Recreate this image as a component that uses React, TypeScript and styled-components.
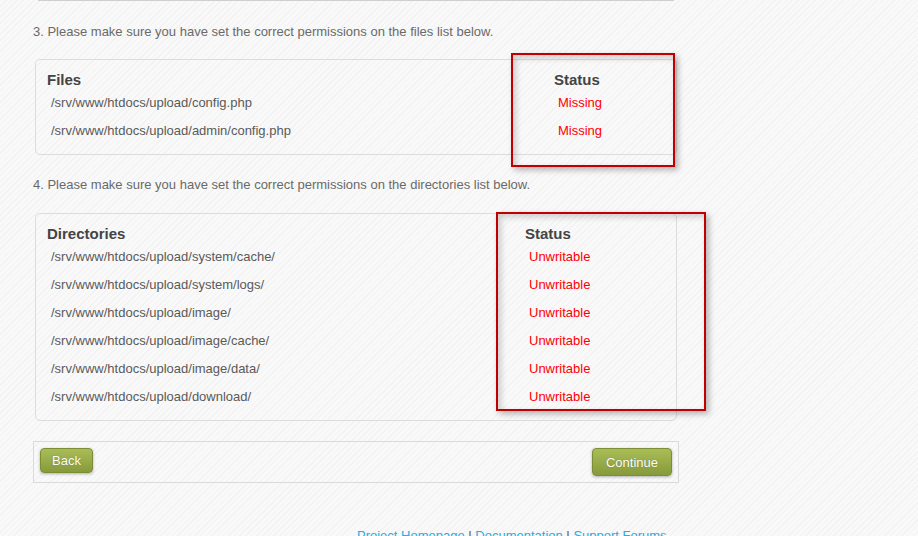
import React from "react";
import styled, { createGlobalStyle } from "styled-components";

const GlobalStyle = createGlobalStyle`
  html, body {
    margin: 0;
    padding: 0;
  }
  body {
    font-family: "Liberation Sans", Arial, sans-serif;
    font-size: 13px;
    color: #666;
    background-color: #f6f6f6;
    background-image: repeating-linear-gradient(
      135deg,
      #f2f2f2 0px,
      #f2f2f2 1px,
      #f9f9f9 1px,
      #f9f9f9 4px
    );
    min-height: 536px;
    overflow: hidden;
  }
`;

const Page = styled.div`
  display: flex;
  flex-direction: column;
  padding-left: 33px;
  width: 646px;
`;

const PrevEdge = styled.div`
  margin-left: 5px;
  width: 636px;
  border-top: 1px solid #cfcfcf;
`;

const Intro = styled.p<{ $top: number }>`
  margin: ${(p) => p.$top}px 0 0 0;
  line-height: 16px;
  font-size: 13px;
  color: #6a6a6a;
`;

const Fieldset = styled.div<{ $top: number }>`
  position: relative;
  box-sizing: border-box;
  margin: ${(p) => p.$top}px 0 0 2px;
  width: 642px;
  padding: 10px 11px 10px 11px;
  border: 1px solid #dcdcdc;
  border-radius: 5px;
  display: flex;
  flex-direction: column;
`;

const Row = styled.div<{ $first: number; $head?: boolean }>`
  display: grid;
  grid-template-columns: ${(p) => p.$first}px 1fr;
  align-items: center;
  height: ${(p) => (p.$head ? 18 : 28)}px;
`;

const HeadCell = styled.div`
  font-size: 15px;
  font-weight: bold;
  color: #444;
`;

const PathCell = styled.div`
  padding-left: 4px;
  color: #5a5a5a;
`;

const StatusCell = styled.div`
  padding-left: 4px;
  color: #ff0000;
`;

const Highlight = styled.div<{ $l: number; $t: number; $w: number; $h: number }>`
  position: absolute;
  box-sizing: border-box;
  left: ${(p) => p.$l}px;
  top: ${(p) => p.$t}px;
  width: ${(p) => p.$w}px;
  height: ${(p) => p.$h}px;
  border: 2px solid #c00000;
  box-shadow: 3px 3px 6px rgba(0, 0, 0, 0.28),
    inset 3px 3px 6px rgba(0, 0, 0, 0.18);
  pointer-events: none;
`;

const ButtonBar = styled.div`
  box-sizing: border-box;
  margin-top: 20px;
  width: 646px;
  height: 42px;
  padding: 6px;
  border: 1px solid #dadada;
  display: flex;
  justify-content: space-between;
  align-items: flex-start;
`;

const GreenButton = styled.button<{ $h: number; $px: number }>`
  box-sizing: border-box;
  height: ${(p) => p.$h}px;
  padding: 0 ${(p) => p.$px}px;
  border: 1px solid #7c8d36;
  border-radius: 4px;
  background: linear-gradient(#a9bd56, #879a3c);
  box-shadow: 0 1px 3px rgba(0, 0, 0, 0.3);
  font-family: "Liberation Sans", Arial, sans-serif;
  font-size: 13px;
  color: #fff;
  text-shadow: 0 0 1px rgba(60, 70, 20, 0.5);
  cursor: pointer;
  line-height: 1;
`;

const Footer = styled.div`
  margin-top: 45px;
  padding-left: 324px;
  font-size: 13px;
  line-height: 16px;
  color: #555;
  white-space: nowrap;
`;

const FooterLink = styled.a`
  color: #2ea9de;
  text-decoration: none;
`;

const files = [
  "/srv/www/htdocs/upload/config.php",
  "/srv/www/htdocs/upload/admin/config.php",
];

const dirs = [
  "/srv/www/htdocs/upload/system/cache/",
  "/srv/www/htdocs/upload/system/logs/",
  "/srv/www/htdocs/upload/image/",
  "/srv/www/htdocs/upload/image/cache/",
  "/srv/www/htdocs/upload/image/data/",
  "/srv/www/htdocs/upload/download/",
];

export default function App() {
  return (
    <>
      <GlobalStyle />
      <Page>
        <PrevEdge />
        <Intro $top={23}>
          3. Please make sure you have set the correct permissions on the files list below.
        </Intro>
        <Fieldset $top={19}>
          <Row $first={507} $head>
            <HeadCell>Files</HeadCell>
            <HeadCell>Status</HeadCell>
          </Row>
          {files.map((f) => (
            <Row $first={507} key={f}>
              <PathCell>{f}</PathCell>
              <StatusCell>Missing</StatusCell>
            </Row>
          ))}
          <Highlight $l={475} $t={-7} $w={164} $h={114} />
        </Fieldset>
        <Intro $top={22}>
          4. Please make sure you have set the correct permissions on the directories list below.
        </Intro>
        <Fieldset $top={20}>
          <Row $first={478} $head>
            <HeadCell>Directories</HeadCell>
            <HeadCell>Status</HeadCell>
          </Row>
          {dirs.map((d) => (
            <Row $first={478} key={d}>
              <PathCell>{d}</PathCell>
              <StatusCell>Unwritable</StatusCell>
            </Row>
          ))}
          <Highlight $l={460} $t={-2} $w={210} $h={199} />
        </Fieldset>
        <ButtonBar>
          <GreenButton $h={25} $px={11}>Back</GreenButton>
          <GreenButton $h={28} $px={13}>Continue</GreenButton>
        </ButtonBar>
        <Footer>
          <FooterLink href="#">Project Homepage</FooterLink> |{" "}
          <FooterLink href="#">Documentation</FooterLink> |{" "}
          <FooterLink href="#">Support Forums</FooterLink>
        </Footer>
      </Page>
    </>
  );
}
